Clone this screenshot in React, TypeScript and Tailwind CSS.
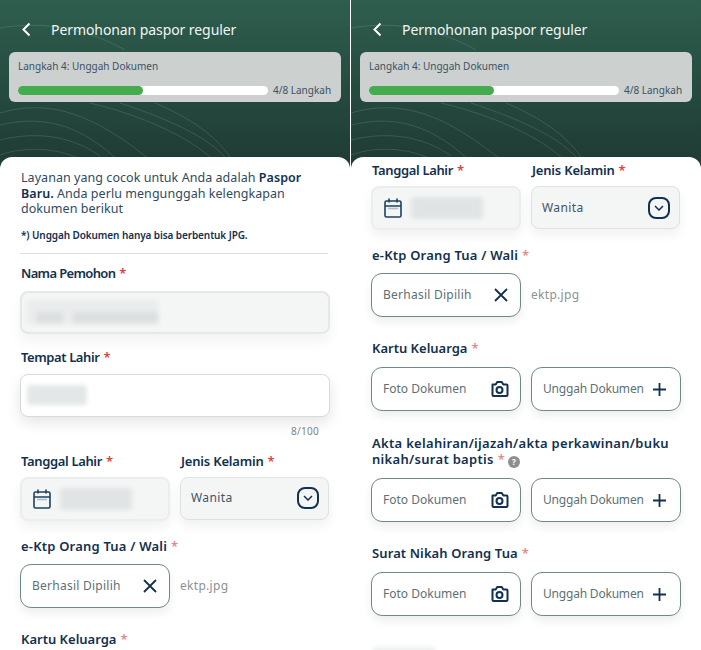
import type { ReactNode } from "react";

const font = { fontFamily: "'Noto Sans', sans-serif" };

function Waves() {
  return (
    <svg
      className="absolute top-0 left-0"
      width="350"
      height="160"
      viewBox="0 0 350 160"
      fill="none"
      stroke="#ffffff"
      strokeOpacity="0.12"
    >
      <path d="M0 28C45 20 90 30 125 50" />
      <path d="M0 113C50 98 95 115 150 160" />
      <path d="M0 125C50 113 85 130 118 160" />
      <path d="M0 140C40 130 75 138 100 156" />
      <path d="M0 155C25 146 55 148 78 158" />
      <path d="M90 103C140 115 185 135 210 157" />
      <path d="M120 103C165 118 205 135 225 157" />
      <path d="M155 103C190 118 215 135 230 157" />
    </svg>
  );
}

function Header() {
  return (
    <div className="relative h-[157px] shrink-0 bg-gradient-to-b from-[#2e5e4e] to-[#1f3d35]">
      <Waves />
      <div className="relative flex h-[52px] items-center pt-[6px]">
        <svg className="ml-[21px]" width="11" height="15" viewBox="0 0 11 15" fill="none">
          <path d="M8.5 1.5 2.5 7.5l6 6" stroke="#ffffff" strokeWidth="2" />
        </svg>
        <span className="ml-[19px] text-[14px] tracking-[-0.08px] text-[#f2f5f4]">
          Permohonan paspor reguler
        </span>
      </div>
      <div className="relative mx-[9px] h-[50px] rounded-md bg-[#ccd0ce] px-[9px] pt-[7px]">
        <div className="text-[10px] leading-[15px] tracking-[0px] text-[#3c5168]">
          Langkah 4: Unggah Dokumen
        </div>
        <div className="mt-[9px] flex items-center">
          <div className="h-[9px] w-[250px] shrink-0 rounded-full bg-white">
            <div className="h-full w-[125px] rounded-full bg-[#45ac4d]" />
          </div>
          <span className="ml-[5px] text-[10px] tracking-[0px] whitespace-nowrap text-[#3c5168]">4/8 Langkah</span>
        </div>
      </div>
    </div>
  );
}

function Label({
  children,
  dim,
  track = "tracking-[0px]",
  extra,
}: {
  children: ReactNode;
  dim?: boolean;
  track?: string;
  extra?: ReactNode;
}) {
  return (
    <div className={`ml-px text-[13px] leading-[16px] font-semibold text-[#12304f] ${track}`}>
      {children}
      <span className={dim ? "ml-1 text-[#e08b8b]" : "ml-1 text-[#e0403c]"}>*</span>
      {extra}
    </div>
  );
}

function Blur({ className }: { className: string }) {
  return <div className={`rounded-sm blur-[2px] ${className}`} />;
}

function HelpDot() {
  return (
    <span className="ml-[3px] inline-flex h-[12px] w-[12px] items-center justify-center rounded-full bg-[#8d8f8f] align-[-1px] text-[8px] leading-none font-bold text-white">
      ?
    </span>
  );
}

function CameraIcon() {
  return (
    <svg width="19" height="18" viewBox="0 0 19 18" fill="none" stroke="#12304f" strokeWidth="2">
      <path d="M2.5 4.5h3.2l1.5-2.5h4.6l1.5 2.5h3.2a1 1 0 0 1 1 1v9.5a1 1 0 0 1-1 1h-13a1 1 0 0 1-1-1V5.5a1 1 0 0 1 1-1Z" strokeLinejoin="round" />
      <circle cx="9.5" cy="10" r="3" />
    </svg>
  );
}

function PlusIcon() {
  return (
    <svg width="15" height="15" viewBox="0 0 15 15" fill="none" stroke="#12304f" strokeWidth="1.8">
      <path d="M7.5 1v13M1 7.5h13" />
    </svg>
  );
}

function CloseIcon() {
  return (
    <svg width="14" height="14" viewBox="0 0 14 14" fill="none" stroke="#12304f" strokeWidth="1.8">
      <path d="m1 1 12 12M13 1 1 13" />
    </svg>
  );
}

function CalendarIcon() {
  return (
    <svg width="18" height="20" viewBox="0 0 18 20" fill="none" stroke="#1d4261" strokeWidth="1.6">
      <rect x="1" y="3" width="16" height="16" rx="1.5" />
      <path d="M1 8h16M5 0.5v4M13 0.5v4" />
      <path d="M4 10.5h10" strokeOpacity="0.3" />
    </svg>
  );
}

function ChevronBox() {
  return (
    <div className="flex h-[22px] w-[22px] items-center justify-center rounded-[8px] border-2 border-[#12304f]">
      <svg width="10" height="6" viewBox="0 0 10 6" fill="none" stroke="#12304f" strokeWidth="1.5">
        <path d="m1 1 4 4 4-4" />
      </svg>
    </div>
  );
}

function DocButton({
  text,
  icon,
  track = "tracking-[0px]",
  pr = "pr-[11px]",
}: {
  text: string;
  icon: ReactNode;
  track?: string;
  pr?: string;
}) {
  return (
    <div
      className={`flex h-[44px] w-[150px] items-center justify-between rounded-[11px] border border-[#6d8a86] bg-white pl-[11px] shadow-[0_5px_10px_rgba(0,0,0,0.07)] ${pr}`}
    >
      <span className={`text-[12px] whitespace-nowrap text-[#5d7076] ${track}`}>{text}</span>
      {icon}
    </div>
  );
}

function DatePair() {
  return (
    <div className="flex gap-[10px]">
      <div className="w-[150px]">
        <Label track="tracking-[-0.35px]">Tanggal Lahir</Label>
        <div className="mt-[8px] flex h-[44px] items-center rounded-lg border-2 border-[#eceeee] bg-[#f4f5f5] pl-[11px] shadow-[0_6px_12px_rgba(0,0,0,0.06)]">
          <CalendarIcon />
          <Blur className="ml-[9px] h-[22px] w-[72px] bg-[#e1e4e5]" />
        </div>
      </div>
      <div className="w-[149px]">
        <Label track="tracking-[-0.2px]">Jenis Kelamin</Label>
        <div className="mt-[8px] flex h-[43px] items-center justify-between rounded-lg border border-[#dfe2e2] bg-[#f4f5f5] pr-[9px] pl-[10px] shadow-[0_6px_12px_rgba(0,0,0,0.06)]">
          <span className="text-[12px] tracking-[0.4px] text-[#3e5468]">Wanita</span>
          <ChevronBox />
        </div>
      </div>
    </div>
  );
}

function KtpField() {
  return (
    <div>
      <Label dim track="tracking-[0.2px]">e-Ktp Orang Tua / Wali</Label>
      <div className="mt-[10px] flex items-center">
        <DocButton text="Berhasil Dipilih" icon={<CloseIcon />} track="tracking-[0.25px]" pr="pr-[12px]" />
        <span className="ml-[10px] text-[12px] tracking-[0.3px] text-[#8b9393]">ektp.jpg</span>
      </div>
    </div>
  );
}

function DocRow() {
  return (
    <div className="flex gap-[10px]">
      <DocButton text="Foto Dokumen" icon={<CameraIcon />} track="tracking-[0px]" />
      <DocButton text="Unggah Dokumen" icon={<PlusIcon />} track="tracking-[-0.2px]" pr="pr-[13px]" />
    </div>
  );
}

function LeftForm() {
  return (
    <div className="h-full rounded-t-xl bg-white px-[20px] pt-[13px]">
      <p className="ml-px text-[12.5px] leading-[15.5px] tracking-[0.05px] text-[#2f4a63]">
        Layanan yang cocok untuk Anda adalah <b className="font-semibold text-[#12304f]">Paspor Baru.</b> Anda perlu mengunggah kelengkapan dokumen berikut
      </p>
      <p className="mt-[11px] ml-px text-[10px] leading-[15px] font-semibold tracking-[-0.1px] text-[#12304f]">
        *) Unggah Dokumen hanya bisa berbentuk JPG.
      </p>
      <div className="mt-[10px] h-px w-[308px] bg-[#dcdfdf]" />
      <div className="mt-[11px]">
        <Label track="tracking-[-0.65px]">Nama Pemohon</Label>
      </div>
      <div className="mt-[10px] flex h-[43px] items-center rounded-lg border-2 border-[#e6e8e8] bg-[#f4f5f5] pl-[5px] shadow-[0_8px_14px_rgba(0,0,0,0.05)]">
        <div className="h-[24px] w-[131px] rounded-sm bg-[#e9ebec] pt-[12px] pl-[10px] blur-[2px]">
          <div className="flex gap-[10px]">
            <div className="h-[12px] w-[26px] bg-[#dcdfe0]" />
            <div className="h-[12px] w-[85px] bg-[#dcdfe0]" />
          </div>
        </div>
      </div>
      <div className="mt-[15px]">
        <Label track="tracking-[-0.4px]">Tempat Lahir</Label>
      </div>
      <div className="mt-[9px] flex h-[43px] items-center rounded-lg border-[1.5px] border-[#d8dbdb] bg-white pl-[6px] shadow-[0_6px_14px_rgba(0,0,0,0.1)]">
        <Blur className="h-[20px] w-[60px] bg-[#e4e7e8]" />
      </div>
      <div className="mt-[7px] pr-[11px] text-right text-[10px] leading-[14px] tracking-[0.3px] text-[#7d8585]">
        8/100
      </div>
      <div className="mt-[15px]">
        <DatePair />
      </div>
      <div className="mt-[17px]">
        <KtpField />
      </div>
      <div className="mt-[23px]">
        <Label dim>Kartu Keluarga</Label>
      </div>
    </div>
  );
}

function RightForm() {
  return (
    <div className="h-full rounded-t-xl bg-white px-[20px] pt-[5px]">
      <DatePair />
      <div className="mt-[17px]">
        <KtpField />
      </div>
      <div className="mt-[23px]">
        <Label dim>Kartu Keluarga</Label>
      </div>
      <div className="mt-[11px]">
        <DocRow />
      </div>
      <div className="mt-[24px]">
        <Label dim track="tracking-[0.3px]" extra={<HelpDot />}>
          Akta kelahiran/ijazah/akta perkawinan/buku nikah/surat baptis
        </Label>
      </div>
      <div className="mt-[10px]">
        <DocRow />
      </div>
      <div className="mt-[23px]">
        <Label dim track="tracking-[0.1px]">Surat Nikah Orang Tua</Label>
      </div>
      <div className="mt-[11px]">
        <DocRow />
      </div>
      <Blur className="mt-[31px] ml-[2px] h-[6px] w-[62px] bg-[#eceeee]" />
    </div>
  );
}

function Phone({ children }: { children: ReactNode }) {
  return (
    <div className="flex h-[650px] w-[350px] flex-col overflow-hidden bg-[#1f3d35]">
      <Header />
      <div className="flex-1">{children}</div>
    </div>
  );
}

export default function App() {
  return (
    <div className="flex h-[650px] w-[701px] gap-px overflow-hidden bg-white" style={font}>
      <Phone>
        <LeftForm />
      </Phone>
      <Phone>
        <RightForm />
      </Phone>
    </div>
  );
}
